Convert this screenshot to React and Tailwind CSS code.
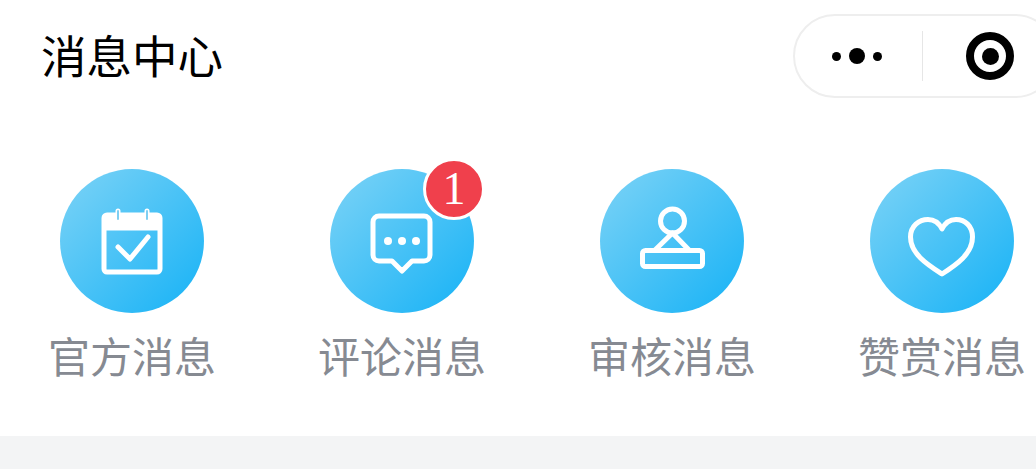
const items = [
  { label: '官方消息', icon: 'calendar' },
  { label: '评论消息', icon: 'comment', badge: 1 },
  { label: '审核消息', icon: 'stamp' },
  { label: '赞赏消息', icon: 'heart' },
];

function Icon({ name }) {
  return (
    <svg width="72" height="72" viewBox="0 0 72 72" fill="none" stroke="white" strokeWidth="5" strokeLinecap="round" strokeLinejoin="round">
      {name === 'calendar' && (
        <>
          <rect x="8" y="10" width="56" height="57" rx="3" />
          <path d="M8 10H64V25H8Z" fill="white" strokeWidth="1" />
          <path d="M22 6V14M51 6V14" strokeWidth="5" />
          <path d="M22 6V14M51 6V14" stroke="#7fcff2" strokeWidth="2" />
          <path d="M22 42L34 54L52 32" />
        </>
      )}
      {name === 'comment' && (
        <>
          <path d="M13 11H58A6 6 0 0 1 64 17V50A6 6 0 0 1 58 56H46L36 66L26 56H13A6 6 0 0 1 7 50V17A6 6 0 0 1 13 11Z" />
          <circle cx="22" cy="36" r="4" fill="white" stroke="none" />
          <circle cx="36" cy="36" r="4" fill="white" stroke="none" />
          <circle cx="50" cy="36" r="4" fill="white" stroke="none" />
        </>
      )}
      {name === 'stamp' && (
        <>
          <circle cx="36.5" cy="16" r="12" />
          <path d="M36.5 28L19 45M36.5 28L53 45" />
          <rect x="6.5" y="45.5" width="60" height="16" rx="3" />
        </>
      )}
      {name === 'heart' && (
        <path d="M36 69C22 60 4.5 49 4.5 32C4.5 21 13 14.5 22 14.5C28 14.5 33 18 36 24C39 18 44 14.5 50 14.5C59 14.5 66.5 21 66.5 32C66.5 49 50 60 36 69Z" />
      )}
    </svg>
  );
}

export default function App() {
  return (
    <div className="flex h-[469px] w-[1036px] flex-col overflow-hidden bg-white font-['Liberation_Sans','Noto_Sans_CJK_SC',sans-serif]">
      <div className="flex h-[112px] items-start justify-between pl-[41px]">
        <h1 className="mt-[30px] text-[45.5px] leading-[58px] font-normal text-black">消息中心</h1>
        <div className="mt-[14px] -mr-[21px] flex h-[84px] w-[264px] shrink-0 items-center rounded-full border-2 border-[#eeeeee] bg-white">
          <div className="flex w-[127px] items-center justify-center gap-[8px] pr-[3px]">
            <span className="h-[9px] w-[9px] rounded-full bg-black" />
            <span className="h-[16px] w-[16px] rounded-full bg-black" />
            <span className="h-[9px] w-[9px] rounded-full bg-black" />
          </div>
          <div className="h-[50px] w-px bg-[#e6e6e6]" />
          <div className="ml-[43px] flex h-[48px] w-[48px] items-center justify-center rounded-full border-[8px] border-black">
            <span className="h-[17px] w-[17px] rounded-full bg-black" />
          </div>
        </div>
      </div>
      <div className="flex flex-1 gap-[126px] pt-[57px] pl-[60px]">
        {items.map((item) => (
          <div key={item.label} className="flex w-[144px] flex-col items-center">
            <div className="relative flex h-[144px] w-[144px] items-center justify-center rounded-full bg-linear-to-br/srgb from-[#7dd3f6] to-[#16b2f6]">
              <Icon name={item.icon} />
              {item.badge && (
                <span className="absolute -top-[11px] -right-[11px] flex h-[62px] w-[62px] items-center justify-center rounded-full border-[3px] border-white bg-[#f0404c] font-['Liberation_Serif',serif] text-[46px] leading-none text-white">
                  {item.badge}
                </span>
              )}
            </div>
            <span className="mt-[21px] text-[42px] leading-[50px] whitespace-nowrap text-[#868a92]">{item.label}</span>
          </div>
        ))}
      </div>
      <div className="h-[33px] bg-[#f3f4f5]" />
    </div>
  );
}
